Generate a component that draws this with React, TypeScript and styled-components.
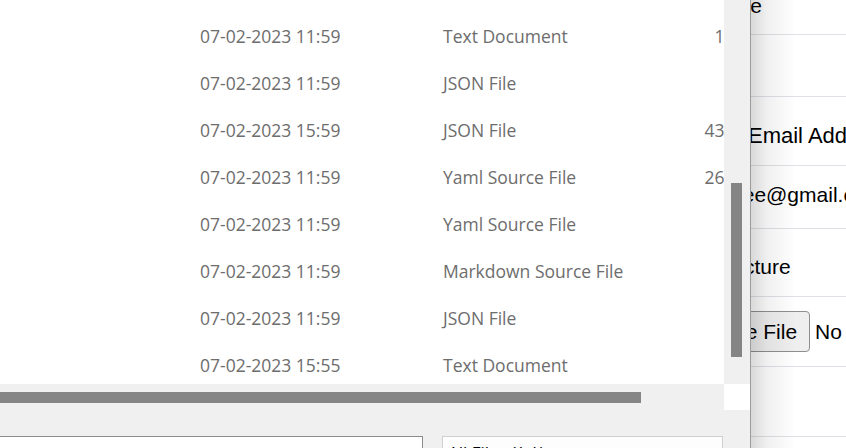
import React from "react";
import styled, { createGlobalStyle } from "styled-components";

const Global = createGlobalStyle`
  html, body { margin: 0; padding: 0; background: #fff; }
  body { width: 846px; height: 448px; overflow: hidden; }
`;

const Page = styled.div`
  position: relative;
  width: 846px;
  height: 448px;
  overflow: hidden;
  font-family: "Liberation Sans", Arial, sans-serif;
  color: #000;
  background: #fff;
`;

const FormTable = styled.div`
  display: flex;
  flex-direction: column;
`;

const FormRow = styled.div<{
  $h: number;
  $top?: number;
  $bottom?: number;
  $left: number;
  $size?: number;
  $first?: boolean;
}>`
  box-sizing: border-box;
  flex: none;
  height: ${(p) => p.$h}px;
  border-top: ${(p) => (p.$first ? "none" : "1px solid #dee2e6")};
  display: flex;
  align-items: ${(p) => (p.$bottom !== undefined ? "flex-end" : "flex-start")};
  gap: 5px;
  padding-top: ${(p) => p.$top ?? 0}px;
  padding-bottom: ${(p) => p.$bottom ?? 0}px;
  padding-left: ${(p) => p.$left}px;
  font-size: ${(p) => p.$size ?? 21}px;
  line-height: 24px;
  white-space: nowrap;
`;

const FileButton = styled.button`
  box-sizing: border-box;
  height: 41px;
  padding: 7px 12px;
  margin: 0;
  border: 1px solid #8f8f8f;
  border-radius: 4px;
  background: #efefef;
  color: #000;
  font-family: inherit;
  font-size: 21px;
  line-height: 25px;
`;

const FileStatus = styled.span`
  line-height: 41px;
`;

const Dialog = styled.div`
  position: absolute;
  left: 0;
  top: 0;
  width: 750px;
  height: 448px;
  background: #f0f0f0;
  border-right: 1px solid #9c9c9c;
  font-family: "Open Sans", "Noto Sans", sans-serif;
  &::after {
    content: "";
    position: absolute;
    left: 100%;
    margin-left: 1px;
    top: 0;
    bottom: 0;
    width: 46px;
    background: linear-gradient(
      to right,
      rgba(0, 0, 0, 0.15),
      rgba(0, 0, 0, 0.06) 35%,
      rgba(0, 0, 0, 0)
    );
    pointer-events: none;
  }
`;

const ScrollArea = styled.div`
  display: grid;
  grid-template-columns: 724px 26px;
  grid-template-rows: 384px 26px;
`;

const FileList = styled.div`
  box-sizing: border-box;
  background: #fff;
  overflow: hidden;
  padding-top: 12px;
`;

const FileRow = styled.div`
  display: grid;
  grid-template-columns: 200px 243px 180px 128px;
  width: 751px;
  height: 47px;
  align-items: center;
  font-size: 17.5px;
  color: #6d6d6d;
  white-space: nowrap;
`;

const Cell = styled.span<{ $right?: boolean }>`
  text-align: ${(p) => (p.$right ? "right" : "left")};
`;

const VTrack = styled.div`
  background: #f0f0f0;
  padding: 183px 8px 0 7px;
`;

const VThumb = styled.div`
  width: 11px;
  height: 174px;
  background: #858585;
`;

const HTrack = styled.div`
  background: #f0f0f0;
  padding-top: 8px;
`;

const HThumb = styled.div`
  width: 641px;
  height: 11px;
  background: #858585;
`;

const Corner = styled.div`
  background: #fff;
`;

const BottomPanel = styled.div`
  display: flex;
  align-items: flex-start;
  gap: 19px;
  padding-top: 26px;
`;

const FileNameBox = styled.div`
  box-sizing: border-box;
  width: 425px;
  height: 32px;
  margin-left: -2px;
  border: 1px solid #8c8c8c;
  background: #fff;
`;

const TypeSelect = styled.div`
  box-sizing: border-box;
  width: 281px;
  height: 32px;
  padding: 4px 0 0 5px;
  border: 1px solid #d0d0d0;
  background: #fdfdfd;
  color: #000;
  font-size: 17px;
  line-height: 23px;
`;

const files = [
  { date: "07-02-2023 11:59", type: "Text Document", size: "1 KB" },
  { date: "07-02-2023 11:59", type: "JSON File", size: "" },
  { date: "07-02-2023 15:59", type: "JSON File", size: "43 KB" },
  { date: "07-02-2023 11:59", type: "Yaml Source File", size: "26 KB" },
  { date: "07-02-2023 11:59", type: "Yaml Source File", size: "" },
  { date: "07-02-2023 11:59", type: "Markdown Source File", size: "" },
  { date: "07-02-2023 11:59", type: "JSON File", size: "" },
  { date: "07-02-2023 15:55", type: "Text Document", size: "" },
];

export default function App() {
  return (
    <>
      <Global />
      <Page>
        <FormTable>
          <FormRow $first $h={34} $bottom={16} $left={706}>
            Name
          </FormRow>
          <FormRow $h={62} $left={706} />
          <FormRow $h={69} $top={27} $left={748} $size={22}>
            Email Address
          </FormRow>
          <FormRow $h={63} $top={17} $left={675}>
            employee@gmail.com
          </FormRow>
          <FormRow $h={68} $top={26} $left={660}>
            Profile Picture
          </FormRow>
          <FormRow $h={70} $top={14} $left={672}>
            <FileButton type="button">Choose File</FileButton>
            <FileStatus>No file chosen</FileStatus>
          </FormRow>
          <FormRow $h={70} $left={672} />
          <FormRow $h={40} $left={672} />
        </FormTable>

        <Dialog>
          <ScrollArea>
            <FileList>
              {files.map((f, i) => (
                <FileRow key={i}>
                  <Cell />
                  <Cell>{f.date}</Cell>
                  <Cell>{f.type}</Cell>
                  <Cell $right>{f.size}</Cell>
                </FileRow>
              ))}
            </FileList>
            <VTrack>
              <VThumb />
            </VTrack>
            <HTrack>
              <HThumb />
            </HTrack>
            <Corner />
          </ScrollArea>
          <BottomPanel>
            <FileNameBox />
            <TypeSelect>All Files (*.*)</TypeSelect>
          </BottomPanel>
        </Dialog>
      </Page>
    </>
  );
}
